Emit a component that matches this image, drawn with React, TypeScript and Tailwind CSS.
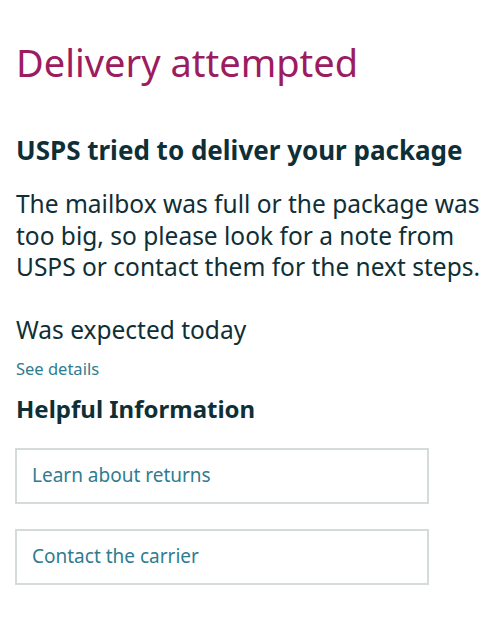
export default function App() {
  return (
    <div className="w-[500px] h-[640px] bg-white px-4 pt-[38px] text-[#0f2f36]" style={{ fontFamily: '"Noto Sans", sans-serif' }}>
      <h1 className="text-[38px] leading-[48px] text-[#9c1c5f]">Delivery attempted</h1>
      <h2 className="mt-[48px] text-[26px] leading-[32px] font-bold">USPS tried to deliver your package</h2>
      <p className="mt-[22px] -mr-4 text-[24.5px] leading-[31.5px]">
        The mailbox was full or the package was too big, so please look for a note from USPS or contact them for the next steps.
      </p>
      <p className="mt-[31px] text-[24.5px] leading-[32px]">Was expected today</p>
      <a className="block mt-[12px] text-[16.5px] leading-[22px] text-[#2f7c8f]">See details</a>
      <h3 className="mt-[14px] text-[24px] leading-[30px] font-bold">Helpful Information</h3>
      <div className="mt-[24px] -ml-px flex flex-col gap-[25px] w-[414px]">
        <div className="h-[56px] border-2 border-[#d5dbdb] flex items-center px-[15px] text-[19px] text-[#2f7c8f]">Learn about returns</div>
        <div className="h-[56px] border-2 border-[#d5dbdb] flex items-center px-[15px] text-[19px] text-[#2f7c8f]">Contact the carrier</div>
      </div>
    </div>
  );
}
